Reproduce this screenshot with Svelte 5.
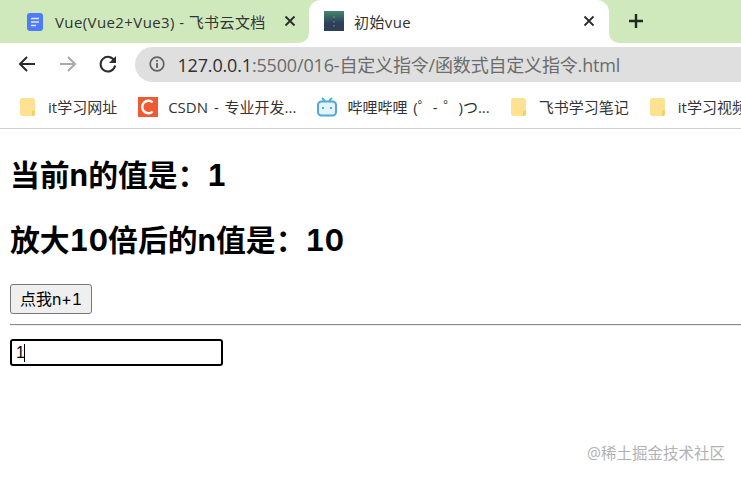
<script>
  let n = $state(1);
  const bookmarks = [
    { icon: "folder", label: "it学习网址" },
    { icon: "csdn", label: "CSDN - 专业开发..." },
    { icon: "bili", label: "哔哩哔哩 (゜- ゜)つ..." },
    { icon: "folder", label: "飞书学习笔记" },
    { icon: "folder", label: "it学习视频" }
  ];
</script>

<div class="page">
  <div class="tabbar">
    <div class="tab inactive">
      <svg class="favicon" viewBox="0 0 16 18" width="16" height="18">
        <path d="M3 0h10a3 3 0 0 1 3 3v12a3 3 0 0 1-3 3H3a3 3 0 0 1-3-3V3a3 3 0 0 1 3-3z" fill="#4e7cf6" />
        <path d="M4 5.5h8M4 9h8M4 12.5h5" stroke="#dfe8ff" stroke-width="1.5" fill="none" />
      </svg>
      <span class="tab-title">Vue(Vue2+Vue3) - 飞书云文档</span>
      <svg class="close" viewBox="0 0 12 12" width="12" height="12">
        <path d="M1.5 1.5l9 9M10.5 1.5l-9 9" stroke="#2a2a2a" stroke-width="1.8" fill="none" />
      </svg>
    </div>
    <div class="tab active">
      <svg class="vue-favicon" viewBox="0 0 20 20" width="20" height="20">
        <defs>
          <linearGradient id="vue-bg" x1="0" y1="0" x2="0" y2="1">
            <stop offset="0" stop-color="#44866f" />
            <stop offset="0.6" stop-color="#2d3f5b" />
          </linearGradient>
        </defs>
        <rect width="20" height="20" fill="url(#vue-bg)" />
        <path d="M10 5v2M10 10v1.5M10 14v1.5" stroke="#5f8f84" stroke-width="1.2" fill="none" />
      </svg>
      <span class="tab-title">初始vue</span>
      <svg class="close" viewBox="0 0 12 12" width="12" height="12">
        <path d="M1.5 1.5l9 9M10.5 1.5l-9 9" stroke="#2a2a2a" stroke-width="1.8" fill="none" />
      </svg>
    </div>
    <div class="tab-rest">
      <svg viewBox="0 0 16 16" width="16" height="16">
        <path d="M8 1v14M1 8h14" stroke="#1f2a1f" stroke-width="2.4" fill="none" />
      </svg>
    </div>
  </div>

  <div class="toolbar">
    <svg class="nav" viewBox="0 0 20 20" width="20" height="20">
      <path d="M18 10H3M10 3l-7 7 7 7" stroke="#2b2b2b" stroke-width="2" fill="none" />
    </svg>
    <svg class="nav" viewBox="0 0 20 20" width="20" height="20">
      <path d="M2 10h15M10 3l7 7-7 7" stroke="#a9a9a9" stroke-width="2" fill="none" />
    </svg>
    <svg class="nav" viewBox="0 0 20 20" width="20" height="20">
      <path d="M16.5 7a7.3 7.3 0 1 0 .6 4.5" stroke="#2b2b2b" stroke-width="2" fill="none" />
      <path d="M18 2v7h-7z" fill="#2b2b2b" />
    </svg>
    <div class="omnibox">
      <svg viewBox="0 0 16 16" width="16" height="16">
        <circle cx="8" cy="8" r="6.8" stroke="#636363" stroke-width="1.7" fill="none" />
        <path d="M8 7v5M8 4v1.8" stroke="#636363" stroke-width="1.8" fill="none" />
      </svg>
      <span class="url"><b>127.0.0.1</b>:5500/016-自定义指令/函数式自定义指令.html</span>
    </div>
  </div>

  <div class="bookmarks">
    {#each bookmarks as b}
      <div class="bookmark">
        {#if b.icon === "folder"}
          <svg class="folder" viewBox="0 0 15 18" width="15" height="18">
            <rect width="15" height="18" rx="2.5" fill="#fde391" />
            <path d="M15 12.5v3a2.5 2.5 0 0 1-2.5 2.5H12v-4.5a1 1 0 0 1 1-1z" fill="#f3cf68" />
          </svg>
        {:else if b.icon === "csdn"}
          <svg viewBox="0 0 20 20" width="20" height="20">
            <rect width="20" height="20" fill="#ee5a32" />
            <path d="M14.6 5.4A6.2 6.2 0 1 0 14.6 14.6" stroke="#fff" stroke-width="2.4" fill="none" />
          </svg>
        {:else}
          <svg viewBox="0 0 20 20" width="20" height="20">
            <path d="M5 1l3 3M15 1l-3 3" stroke="#4fa9d6" stroke-width="1.8" fill="none" />
            <rect x="1" y="4.5" width="18" height="14" rx="3.5" stroke="#4fa9d6" stroke-width="2" fill="#e4f3fa" />
            <path d="M6 10v2M14 10v2" stroke="#4fa9d6" stroke-width="2" fill="none" />
          </svg>
        {/if}
        <span>{b.label}</span>
      </div>
    {/each}
  </div>

  <div class="content">
    <h2>当前n的值是：{n}</h2>
    <h2>放大10倍后的n值是：{n * 10}</h2>
    <button onclick={() => n++}>点我n+1</button>
    <hr />
    <div class="field">
      <input type="text" value={n} />
      <span class="caret"></span>
    </div>
  </div>

  <div class="watermark">@稀土掘金技术社区</div>
</div>

<style>
  :global(body) {
    margin: 0;
    background: #fff;
  }
  .page {
    position: relative;
    width: 741px;
    height: 478px;
    overflow: hidden;
    font-family: "Open Sans", "Noto Sans CJK SC", sans-serif;
    color: #333;
  }
  .tabbar {
    display: flex;
    height: 43px;
    background: linear-gradient(#cfe9bc 50%, #fff 50%);
  }
  .tab {
    display: flex;
    align-items: center;
    box-sizing: border-box;
    font-size: 15px;
    letter-spacing: 0.4px;
  }
  .tab.inactive {
    width: 309px;
    padding: 0 13px 0 27px;
    background: #cfe9bc;
    border-bottom-right-radius: 10px;
  }
  .tab.active {
    width: 300px;
    padding: 0 14px 0 15px;
    background: #fff;
    border-radius: 12px 12px 0 0;
  }
  .tab-title {
    flex: 1;
    margin-left: 12px;
    white-space: nowrap;
  }
  .vue-favicon {
    margin-top: -2px;
    margin-right: -2px;
  }
  .close {
    margin-top: -2px;
  }
  .tab-rest {
    flex: 1;
    display: flex;
    align-items: center;
    padding-left: 19px;
    padding-bottom: 2px;
    background: #cfe9bc;
    border-bottom-left-radius: 10px;
  }
  .toolbar {
    display: flex;
    align-items: center;
    height: 42px;
    padding-left: 17px;
    gap: 20.5px;
  }
  .nav {
    flex: none;
  }
  .omnibox {
    flex: 1;
    display: flex;
    align-items: center;
    gap: 13px;
    height: 35px;
    margin-left: -4px;
    padding-left: 14px;
    background: #dfdfdf;
    border-radius: 18px 0 0 18px;
    white-space: nowrap;
  }
  .url {
    font-size: 18px;
    letter-spacing: -0.17px;
    color: #6b6b6b;
  }
  .url b {
    font-weight: 400;
    color: #303030;
  }
  .bookmarks {
    display: flex;
    align-items: center;
    height: 43px;
    padding-left: 20px;
    gap: 21px;
    border-bottom: 1px solid #d0d0d0;
    font-size: 15px;
    word-spacing: 2px;
    white-space: nowrap;
  }
  .bookmark {
    display: flex;
    align-items: center;
    gap: 10px;
  }
  .folder {
    margin-right: 3px;
  }
  .content {
    padding: 29px 0 0 10px;
    font-family: Inter, "Noto Sans CJK SC", sans-serif;
    font-variant-numeric: tabular-nums;
    color: #000;
  }
  h2 {
    margin: 0 0 30px;
    font-size: 29.8px;
    line-height: 35px;
    font-weight: 700;
  }
  button {
    display: block;
    box-sizing: border-box;
    width: 82px;
    height: 30px;
    margin: -4px 0 0;
    padding: 0 0 2px;
    border: 1px solid #767676;
    border-radius: 3px;
    background: #efefef;
    font: 16px Inter, "Noto Sans CJK SC", sans-serif;
    font-variant-numeric: tabular-nums;
    color: #000;
  }
  hr {
    margin: 10px 0 13px;
    height: 0;
    border: 0;
    border-top: 1px solid #8a8a8a;
    border-bottom: 1px solid #eee;
  }
  .field {
    position: relative;
    width: 213px;
  }
  input {
    display: block;
    box-sizing: border-box;
    width: 213px;
    height: 27px;
    padding: 0 3px 0 4px;
    border: 2px solid #000;
    border-radius: 3px;
    outline: none;
    font: 16px "Liberation Sans", sans-serif;
    color: #000;
    caret-color: transparent;
  }
  .caret {
    position: absolute;
    left: 14px;
    top: 5px;
    width: 1px;
    height: 18px;
    background: #000;
  }
  .watermark {
    position: absolute;
    right: 16px;
    top: 444px;
    font-size: 15.5px;
    line-height: 18px;
    color: #b2b2b2;
  }
</style>
